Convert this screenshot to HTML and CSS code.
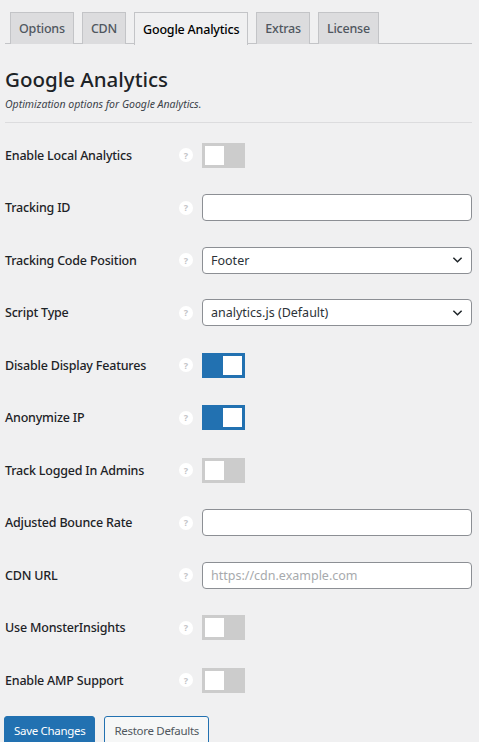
FILE: index.html
```html
<!DOCTYPE html>
<html>
<head>
  <meta charset="UTF-8">
  <title>Google Analytics</title>
  <link rel="stylesheet" href="styles.css">
</head>
<body>
  <div class="tabs">
    <a class="tab">Options</a>
    <a class="tab">CDN</a>
    <a class="tab active">Google Analytics</a>
    <a class="tab">Extras</a>
    <a class="tab">License</a>
  </div>

  <div class="section-head">
    <h2>Google Analytics</h2>
    <p class="desc">Optimization options for Google Analytics.</p>
  </div>

  <div class="form">
    <div class="row">
      <label>Enable Local Analytics</label>
      <span class="help">?</span>
      <span class="toggle"></span>
    </div>
    <div class="row">
      <label>Tracking ID</label>
      <span class="help">?</span>
      <input class="text" type="text">
    </div>
    <div class="row">
      <label>Tracking Code Position</label>
      <span class="help">?</span>
      <div class="select">Footer
        <svg viewBox="0 0 12 8"><path d="M1.5 1.5 6 6l4.5-4.5" fill="none" stroke="#1d2327" stroke-width="1.6"/></svg>
      </div>
    </div>
    <div class="row">
      <label>Script Type</label>
      <span class="help">?</span>
      <div class="select">analytics.js (Default)
        <svg viewBox="0 0 12 8"><path d="M1.5 1.5 6 6l4.5-4.5" fill="none" stroke="#1d2327" stroke-width="1.6"/></svg>
      </div>
    </div>
    <div class="row">
      <label>Disable Display Features</label>
      <span class="help">?</span>
      <span class="toggle on"></span>
    </div>
    <div class="row">
      <label>Anonymize IP</label>
      <span class="help">?</span>
      <span class="toggle on"></span>
    </div>
    <div class="row">
      <label>Track Logged In Admins</label>
      <span class="help">?</span>
      <span class="toggle"></span>
    </div>
    <div class="row">
      <label>Adjusted Bounce Rate</label>
      <span class="help">?</span>
      <input class="text" type="text">
    </div>
    <div class="row">
      <label>CDN URL</label>
      <span class="help">?</span>
      <input class="text" type="text" placeholder="https://cdn.example.com">
    </div>
    <div class="row">
      <label>Use MonsterInsights</label>
      <span class="help">?</span>
      <span class="toggle"></span>
    </div>
    <div class="row">
      <label>Enable AMP Support</label>
      <span class="help">?</span>
      <span class="toggle"></span>
    </div>
  </div>

  <div class="buttons">
    <button class="primary">Save Changes</button>
    <button class="secondary">Restore Defaults</button>
  </div>
</body>
</html>
```

FILE: styles.css
```css
body {
  margin: 0;
  padding: 0 7px 0 5px;
  background: #f0f0f1;
  font-family: "Noto Sans", "Open Sans", sans-serif;
  color: #1d2327;
  font-size: 13px;
}

.tabs {
  display: flex;
  gap: 8px;
  padding: 12px 0 0 5px;
  border-bottom: 1px solid #c3c4c7;
  height: 31px;
}

.tab {
  display: flex;
  align-items: center;
  padding: 0 8px;
  height: 31px;
  background: #dcdcde;
  border: 1px solid #c3c4c7;
  border-bottom: none;
  color: #50575e;
  font-size: 12.5px;
  font-weight: 500;
  letter-spacing: -0.2px;
}

.tab.active {
  background: #f0f0f1;
  color: #000;
  height: 32px;
  margin-bottom: -1px;
}

.section-head {
  border-bottom: 1px solid #dcdcde;
  padding: 21px 0 11px;
}

.section-head h2 {
  margin: 0;
  font-size: 20.5px;
  font-weight: 500;
  line-height: 29px;
  color: #1d2327;
}

.desc {
  margin: 3px 0 0;
  font-size: 10.5px;
  font-style: italic;
  color: #3c434a;
}

.form {
  padding-top: 6px;
}

.row {
  display: flex;
  align-items: center;
  height: 52.5px;
}

.row label {
  width: 174px;
  font-size: 12.5px;
  font-weight: 500;
  letter-spacing: -0.2px;
}

.help {
  width: 14px;
  height: 14px;
  border-radius: 50%;
  background: #fff;
  color: #c3c4c7;
  font-size: 9px;
  font-weight: 700;
  display: flex;
  align-items: center;
  justify-content: center;
  margin-right: 9px;
}

.toggle {
  width: 43px;
  height: 25px;
  background: #ccc;
  position: relative;
}

.toggle::after {
  content: "";
  position: absolute;
  top: 3px;
  left: 3px;
  width: 19px;
  height: 19px;
  background: #fff;
}

.toggle.on {
  background: #2271b1;
}

.toggle.on::after {
  left: 21px;
}

.text,
.select {
  box-sizing: border-box;
  width: 270px;
  height: 27px;
  border: 1px solid #8c8f94;
  border-radius: 4px;
  background: #fff;
  font-family: inherit;
  font-size: 12.5px;
  padding: 0 8px;
  margin: 0;
  color: #2c3338;
}

.text::placeholder {
  color: #a7aaad;
}

.select {
  display: flex;
  align-items: center;
  justify-content: space-between;
}

.select svg {
  width: 11px;
  height: 8px;
}

.buttons {
  display: flex;
  gap: 9px;
  padding-top: 9px;
  margin-left: -1px;
}

.buttons button {
  height: 30px;
  padding: 0 9px;
  border-radius: 3px;
  font-family: inherit;
  font-size: 11.5px;
  letter-spacing: -0.3px;
}

.primary {
  background: #2271b1;
  border: 1px solid #2271b1;
  color: #fff;
}

.secondary {
  background: #f6f7f7;
  border: 1px solid #2271b1;
  color: #50575e;
}
```
